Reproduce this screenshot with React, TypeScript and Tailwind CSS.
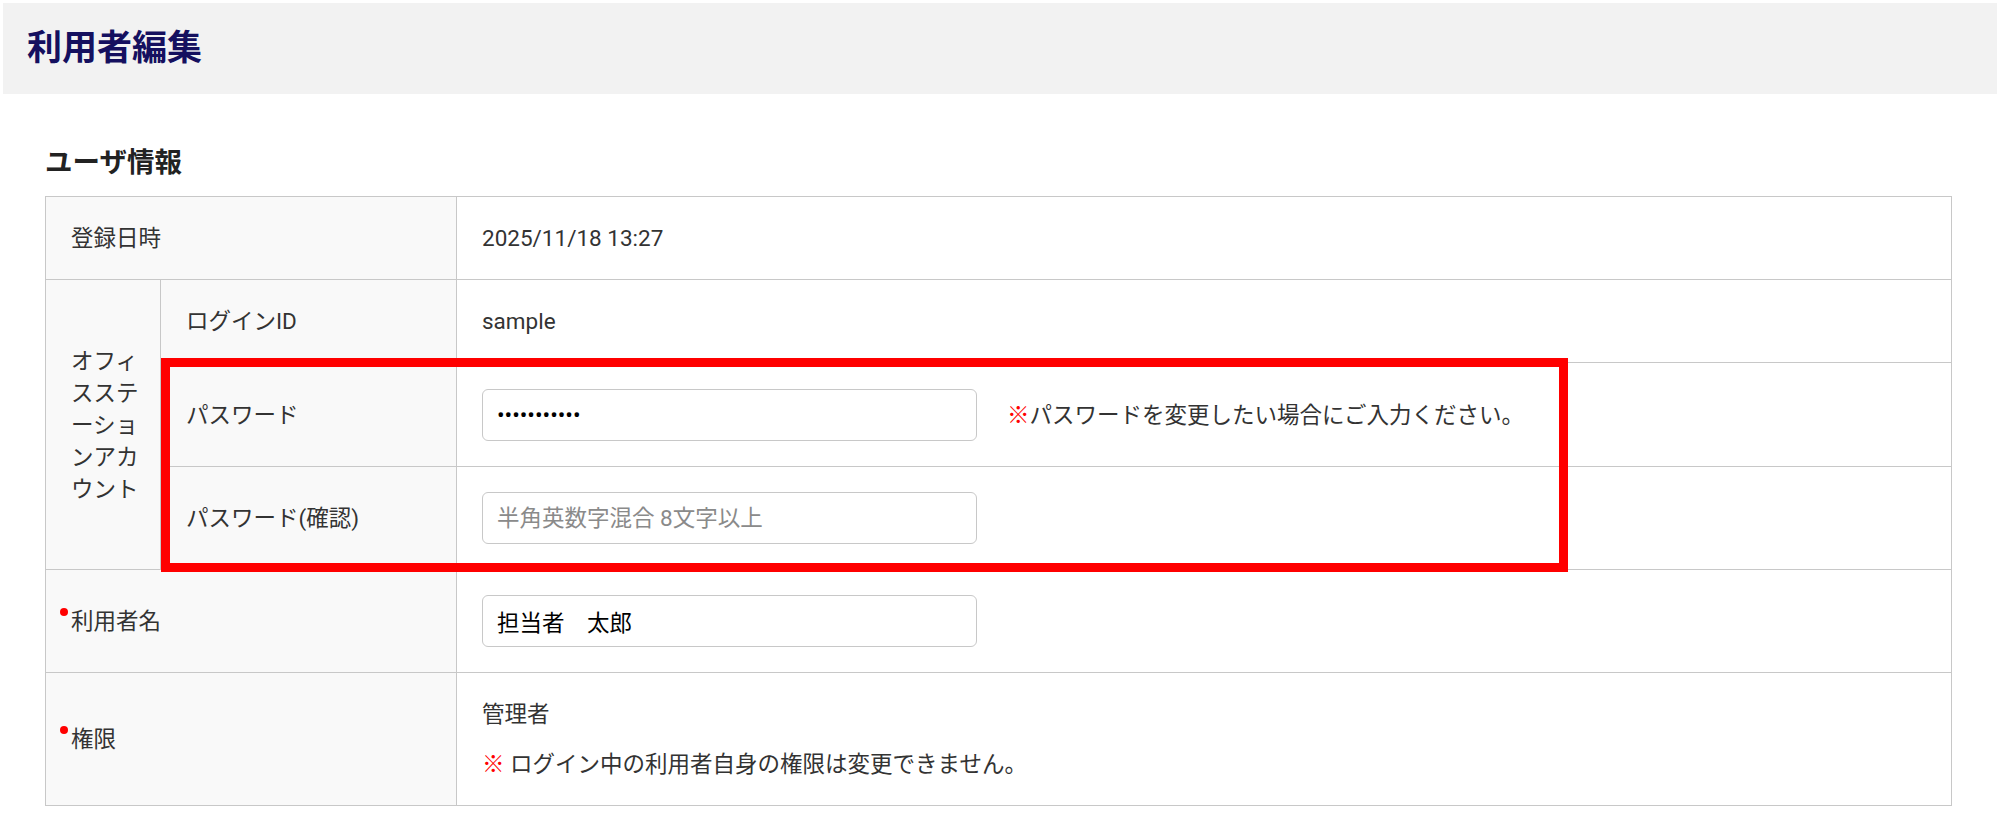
import React from "react";

const border = "border-[#c8c8c8]";
const labelCell = `flex items-center border-b border-r ${border} bg-[#f9f9f9] pl-[25px]`;
const valueCell = `flex items-center border-b ${border} bg-white pl-[25px]`;
const inputCls =
  "h-[52px] w-[495px] rounded-[6px] border border-[#c8c8c8] bg-white px-[14px] text-[22.5px] text-black outline-none placeholder:text-[#8a8a8a]";

function Required({ children }: { children: React.ReactNode }) {
  return (
    <span className="relative">
      <span className="absolute -left-[11px] top-[3px] size-[8px] rounded-full bg-[#ff0000]" />
      {children}
    </span>
  );
}

function Note({ children, spaced }: { children: React.ReactNode; spaced?: boolean }) {
  return (
    <span className="text-[#333]">
      <span className="text-[#ff0000]">※</span>
      {spaced ? " " : ""}
      {children}
    </span>
  );
}

export default function App() {
  return (
    <div className="min-h-screen bg-white px-[3px] pt-[3px] font-[family-name:Roboto,'Noto_Sans_CJK_JP',sans-serif] text-[22.5px] leading-[32px] text-[#333]">
      <div className="flex h-[91px] items-center bg-[#f2f2f2] pl-[24px]">
        <h1 className="text-[35px] font-bold leading-[40px] text-[#15105f]">利用者編集</h1>
      </div>

      <div className="ml-[42px] w-[1907px]">
        <h2 className="mt-[49px] mb-[13px] text-[27.5px] font-bold leading-[40px] text-[#222]">ユーザ情報</h2>

        <div
          className={`relative grid grid-cols-[115px_296px_1fr] grid-rows-[83px_83px_104px_103px_103px_132px] border ${border}`}
        >
          {/* 登録日時 */}
          <div className={`${labelCell} col-span-2`}>登録日時</div>
          <div className={valueCell}>2025/11/18 13:27</div>

          {/* account group */}
          <div className={`${labelCell} row-span-3 pr-[18px]`}>
            <span className="break-all">オフィスステーションアカウント</span>
          </div>
          <div className={labelCell}>ログインID</div>
          <div className={valueCell}>sample</div>

          <div className={labelCell}>パスワード</div>
          <div className={`${valueCell} gap-[30px]`}>
            <input type="password" defaultValue="abcdefghijk" className={inputCls} />
            <Note>パスワードを変更したい場合にご入力ください。</Note>
          </div>

          <div className={labelCell}>パスワード(確認)</div>
          <div className={valueCell}>
            <input type="password" placeholder="半角英数字混合 8文字以上" className={inputCls} />
          </div>

          {/* 利用者名 */}
          <div className={`${labelCell} col-span-2`}>
            <Required>利用者名</Required>
          </div>
          <div className={valueCell}>
            <input type="text" defaultValue="担当者　太郎" className={inputCls} />
          </div>

          {/* 権限 */}
          <div className={`flex items-center border-r ${border} bg-[#f9f9f9] pl-[25px] col-span-2`}>
            <Required>権限</Required>
          </div>
          <div className="flex flex-col justify-center gap-[18px] bg-white pl-[25px]">
            <div>管理者</div>
            <Note spaced>ログイン中の利用者自身の権限は変更できません。</Note>
          </div>

          {/* annotation frame */}
          <div className="pointer-events-none absolute left-[115px] top-[161px] h-[214px] w-[1407px] border-[9px] border-[#ff0000]" />
        </div>
      </div>
    </div>
  );
}
